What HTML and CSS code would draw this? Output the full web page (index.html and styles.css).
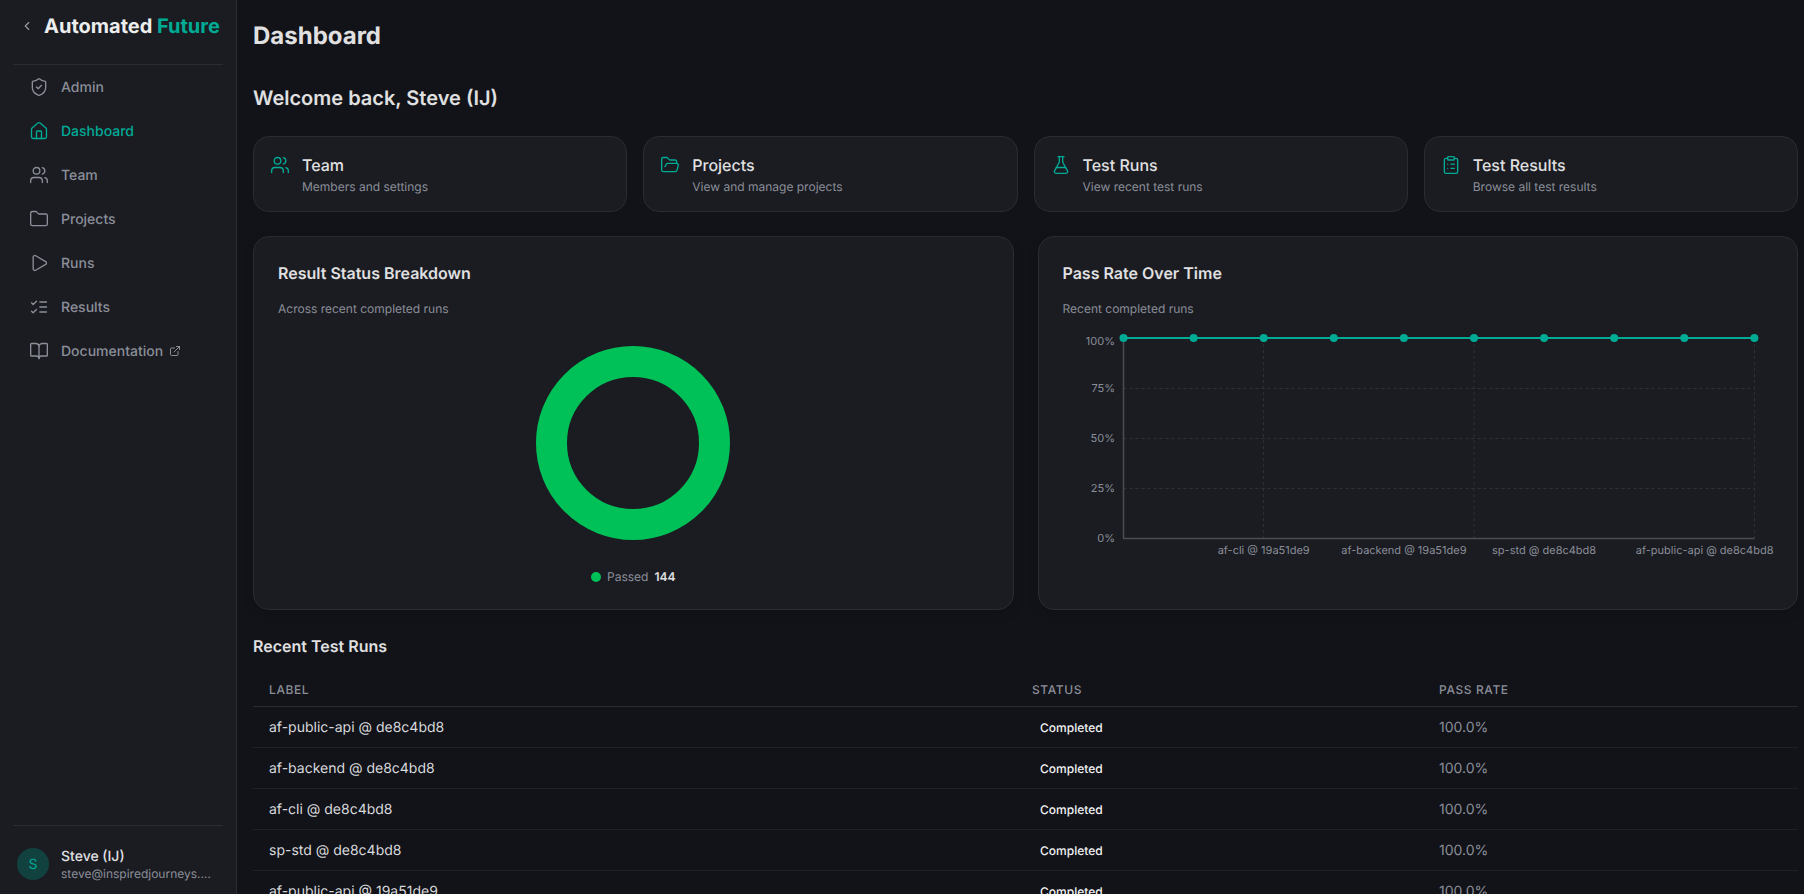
FILE: index.html
```html
<!DOCTYPE html>
<html lang="en">
<head>
<meta charset="utf-8">
<title>Dashboard</title>
<link rel="stylesheet" href="styles.css">
</head>
<body>
<div class="app">
  <aside class="sidebar">
    <div class="brand">
      <svg class="chev" viewBox="0 0 24 24"><path d="m15 18-6-6 6-6"/></svg>
      <span class="brand-name">Automated <em>Future</em></span>
    </div>
    <nav class="nav">
      <a class="nav-item"><svg class="ico" viewBox="0 0 24 24"><path d="M20 13c0 5-3.5 7.5-7.66 8.95a1 1 0 0 1-.67-.01C7.5 20.5 4 18 4 13V6a1 1 0 0 1 1-1c2 0 4.5-1.2 6.24-2.72a1.17 1.17 0 0 1 1.52 0C14.51 3.81 17 5 19 5a1 1 0 0 1 1 1z"/><path d="m9 12 2 2 4-4"/></svg>Admin</a>
      <a class="nav-item active"><svg class="ico" viewBox="0 0 24 24"><path d="M15 21v-8a1 1 0 0 0-1-1h-4a1 1 0 0 0-1 1v8"/><path d="M3 10a2 2 0 0 1 .709-1.528l7-5.999a2 2 0 0 1 2.582 0l7 5.999A2 2 0 0 1 21 10v9a2 2 0 0 1-2 2H5a2 2 0 0 1-2-2z"/></svg>Dashboard</a>
      <a class="nav-item"><svg class="ico" viewBox="0 0 24 24"><path d="M16 21v-2a4 4 0 0 0-4-4H6a4 4 0 0 0-4 4v2"/><circle cx="9" cy="7" r="4"/><path d="M22 21v-2a4 4 0 0 0-3-3.87"/><path d="M16 3.13a4 4 0 0 1 0 7.75"/></svg>Team</a>
      <a class="nav-item"><svg class="ico" viewBox="0 0 24 24"><path d="M20 20a2 2 0 0 0 2-2V8a2 2 0 0 0-2-2h-7.9a2 2 0 0 1-1.69-.9L9.6 3.9A2 2 0 0 0 7.93 3H4a2 2 0 0 0-2 2v13a2 2 0 0 0 2 2Z"/></svg>Projects</a>
      <a class="nav-item"><svg class="ico" viewBox="0 0 24 24"><path d="M5 5a2 2 0 0 1 3.008-1.728l11.997 6.998a2 2 0 0 1 .003 3.458l-12 7A2 2 0 0 1 5 19z"/></svg>Runs</a>
      <a class="nav-item"><svg class="ico" viewBox="0 0 24 24"><path d="m3 17 2 2 4-4"/><path d="m3 7 2 2 4-4"/><path d="M13 6h8"/><path d="M13 12h8"/><path d="M13 18h8"/></svg>Results</a>
      <a class="nav-item"><svg class="ico" viewBox="0 0 24 24"><path d="M12 7v14"/><path d="M3 18a1 1 0 0 1-1-1V4a1 1 0 0 1 1-1h5a4 4 0 0 1 4 4 4 4 0 0 1 4-4h5a1 1 0 0 1 1 1v13a1 1 0 0 1-1 1h-6a3 3 0 0 0-3 3 3 3 0 0 0-3-3z"/></svg>Documentation<svg class="ext" viewBox="0 0 24 24"><path d="M15 3h6v6"/><path d="M10 14 21 3"/><path d="M18 13v6a2 2 0 0 1-2 2H5a2 2 0 0 1-2-2V8a2 2 0 0 1 2-2h6"/></svg></a>
    </nav>
    <div class="user">
      <div class="avatar">S</div>
      <div class="user-info">
        <div class="user-name">Steve (IJ)</div>
        <div class="user-mail">steve@inspiredjourneys.com</div>
      </div>
    </div>
  </aside>
  <main class="main">
    <h1 class="page-title">Dashboard</h1>
    <h2 class="welcome">Welcome back, Steve (IJ)</h2>
    <section class="quick">
      <a class="quick-card"><svg class="qico" viewBox="0 0 24 24"><path d="M16 21v-2a4 4 0 0 0-4-4H6a4 4 0 0 0-4 4v2"/><circle cx="9" cy="7" r="4"/><path d="M22 21v-2a4 4 0 0 0-3-3.87"/><path d="M16 3.13a4 4 0 0 1 0 7.75"/></svg><div><div class="q-title">Team</div><div class="q-sub">Members and settings</div></div></a>
      <a class="quick-card"><svg class="qico" viewBox="0 0 24 24"><path d="m6 14 1.5-2.9A2 2 0 0 1 9.24 10H20a2 2 0 0 1 1.94 2.5l-1.54 6a2 2 0 0 1-1.95 1.5H4a2 2 0 0 1-2-2V5a2 2 0 0 1 2-2h3.9a2 2 0 0 1 1.69.9l.81 1.2a2 2 0 0 0 1.67.9H18a2 2 0 0 1 2 2v2"/></svg><div><div class="q-title">Projects</div><div class="q-sub">View and manage projects</div></div></a>
      <a class="quick-card"><svg class="qico" viewBox="0 0 24 24"><path d="M14 2v6a2 2 0 0 0 .245.96l5.51 10.08A2 2 0 0 1 18 22H6a2 2 0 0 1-1.755-2.96l5.51-10.08A2 2 0 0 0 10 8V2"/><path d="M6.453 15h11.094"/><path d="M8.5 2h7"/></svg><div><div class="q-title">Test Runs</div><div class="q-sub">View recent test runs</div></div></a>
      <a class="quick-card"><svg class="qico" viewBox="0 0 24 24"><rect width="8" height="4" x="8" y="2" rx="1" ry="1"/><path d="M16 4h2a2 2 0 0 1 2 2v14a2 2 0 0 1-2 2H6a2 2 0 0 1-2-2V6a2 2 0 0 1 2-2h2"/><path d="M12 11h4"/><path d="M12 16h4"/><path d="M8 11h.01"/><path d="M8 16h.01"/></svg><div><div class="q-title">Test Results</div><div class="q-sub">Browse all test results</div></div></a>
    </section>
    <section class="charts">
      <div class="chart-card">
        <h3 class="chart-title">Result Status Breakdown</h3>
        <p class="chart-sub">Across recent completed runs</p>
        <div class="donut-wrap"><div class="donut"></div></div>
        <div class="legend"><span class="dot"></span><span class="legend-label">Passed</span><b class="legend-val">144</b></div>
      </div>
      <div class="chart-card">
        <h3 class="chart-title">Pass Rate Over Time</h3>
        <p class="chart-sub">Recent completed runs</p>
        <svg class="line-chart" viewBox="0 0 711 240">
          <g class="grid">
            <path d="M60.5 59.5H691.5M60.5 109.5H691.5M60.5 159.5H691.5"/>
            <path d="M200.5 9V209M411 9V209M691.5 9V209"/>
          </g>
          <path class="axis" d="M60.5 9V209.5H691.5"/>
          <g class="ylab">
            <text x="52" y="16">100%</text><text x="52" y="63">75%</text><text x="52" y="113">50%</text><text x="52" y="163">25%</text><text x="52" y="213">0%</text>
          </g>
          <path class="line" d="M60.5 9H691.5"/>
          <g class="pts">
            <circle cx="60.5" cy="9" r="4"/><circle cx="130.6" cy="9" r="4"/><circle cx="200.7" cy="9" r="4"/><circle cx="270.8" cy="9" r="4"/><circle cx="340.9" cy="9" r="4"/><circle cx="411" cy="9" r="4"/><circle cx="481.1" cy="9" r="4"/><circle cx="551.2" cy="9" r="4"/><circle cx="621.3" cy="9" r="4"/><circle cx="691.4" cy="9" r="4"/>
          </g>
          <g class="xlab">
            <text x="200.7" y="225">af-cli @ 19a51de9</text><text x="340.9" y="225">af-backend @ 19a51de9</text><text x="481.1" y="225">sp-std @ de8c4bd8</text><text class="xlab-end" x="710.5" y="225">af-public-api @ de8c4bd8</text>
          </g>
        </svg>
      </div>
    </section>
    <h3 class="table-title">Recent Test Runs</h3>
    <table class="runs">
      <thead><tr><th class="c-label">Label</th><th class="c-status">Status</th><th class="c-rate">Pass Rate</th></tr></thead>
      <tbody>
        <tr><td class="t-label">af-public-api @ de8c4bd8</td><td><span class="badge">Completed</span></td><td class="t-rate">100.0%</td></tr>
        <tr><td class="t-label">af-backend @ de8c4bd8</td><td><span class="badge">Completed</span></td><td class="t-rate">100.0%</td></tr>
        <tr><td class="t-label">af-cli @ de8c4bd8</td><td><span class="badge">Completed</span></td><td class="t-rate">100.0%</td></tr>
        <tr><td class="t-label">sp-std @ de8c4bd8</td><td><span class="badge">Completed</span></td><td class="t-rate">100.0%</td></tr>
        <tr><td class="t-label">af-public-api @ 19a51de9</td><td><span class="badge">Completed</span></td><td class="t-rate">100.0%</td></tr>
      </tbody>
    </table>
  </main>
</div>
</body>
</html>
```
FILE: styles.css
```css
* { box-sizing: border-box; }
html, body { margin: 0; height: 100%; overflow: hidden; }
body { background: #111318; color: #e0e0e1; font-family: Inter, "Liberation Sans", sans-serif; text-rendering: geometricPrecision; }
.app { display: flex; height: 894px; }

.sidebar { width: 237px; flex: none; background: #1a1c22; border-right: 1px solid #2a2c32; padding: 0 13px; display: flex; flex-direction: column; }
.brand { height: 65px; flex: none; border-bottom: 1px solid #2a2c32; display: flex; align-items: flex-start; padding: 14px 0 0 7px; gap: 10px; }
.chev { width: 14px; height: 14px; margin-top: 5px; flex: none; fill: none; stroke: #9a9ca5; stroke-width: 2; stroke-linecap: round; stroke-linejoin: round; }
.brand-name { font-size: 20px; font-weight: 700; line-height: 24px; color: #eceded; white-space: nowrap; }
.brand-name em { font-style: normal; color: #00ab96; }
.nav { display: flex; flex-direction: column; flex: 1; }
.nav-item { height: 44px; display: flex; align-items: center; padding-left: 16px; gap: 12px; font-size: 14px; font-weight: 500; color: #8b8e98; }
.nav-item.active { color: #00ab96; }
.ico { width: 20px; height: 20px; flex: none; fill: none; stroke: currentColor; stroke-width: 1.6; stroke-linecap: round; stroke-linejoin: round; }
.ext { width: 12px; height: 12px; margin-left: -6px; fill: none; stroke: currentColor; stroke-width: 2; stroke-linecap: round; stroke-linejoin: round; }
.user { border-top: 1px solid #2a2c32; height: 69px; flex: none; display: flex; gap: 12px; padding: 22px 11px 0 4px; }
.avatar { width: 32px; height: 32px; border-radius: 50%; background: #12423f; color: #00ab96; font-size: 14px; display: flex; align-items: center; justify-content: center; flex: none; }
.user-info { min-width: 0; flex: 1; margin-top: -1px; }
.user-name { font-size: 14px; line-height: 20px; font-weight: 500; color: #e0e0e1; }
.user-mail { font-size: 12px; line-height: 16px; margin-top: -1px; color: #8b8e98; overflow: hidden; text-overflow: ellipsis; white-space: nowrap; }

.main { flex: 1; min-width: 0; padding: 19px 6px 0 16px; overflow: hidden; }
.page-title { margin: 0; font-size: 24px; line-height: 34px; font-weight: 700; color: #e0e0e1; }
.welcome { margin: 31px 0 0; font-size: 20px; line-height: 28px; font-weight: 600; color: #e0e0e1; }
.quick { display: grid; grid-template-columns: repeat(4, minmax(0, 1fr)); gap: 16px; margin-top: 24px; }
.quick-card { height: 76px; background: #1a1c22; border: 1px solid #2a2c32; border-radius: 16px; display: flex; align-items: flex-start; gap: 12px; padding: 16px 16px 0 16px; }
.qico { width: 20px; height: 20px; margin-top: 2px; flex: none; fill: none; stroke: #00ab96; stroke-width: 1.6; stroke-linecap: round; stroke-linejoin: round; }
.q-title { font-size: 16px; line-height: 24px; font-weight: 500; color: #e0e0e1; }
.q-sub { font-size: 12px; line-height: 16px; margin-top: 2px; color: #8b8e98; }

.charts { display: grid; grid-template-columns: repeat(2, minmax(0, 1fr)); gap: 24px; margin-top: 24px; }
.chart-card { height: 374px; background: #1a1c22; border: 1px solid #2a2c32; border-radius: 16px; padding: 24px; box-shadow: 0 4px 12px rgba(0,0,0,.12); }
.chart-title { margin: 0; font-size: 16px; line-height: 24px; font-weight: 600; color: #e0e0e1; }
.chart-sub { margin: 16px 0 0; font-size: 12px; line-height: 16px; color: #8b8e98; }
.donut-wrap { display: flex; justify-content: center; margin-top: 29px; }
.donut { width: 194px; height: 194px; border-radius: 50%; border: 31px solid #00c158; }
.legend { display: flex; justify-content: center; align-items: center; margin-top: 29px; font-size: 12px; line-height: 16px; }
.dot { width: 10px; height: 10px; border-radius: 50%; background: #00c158; margin-right: 6px; }
.legend-label { color: #8b8e98; margin-right: 6px; }
.legend-val { font-weight: 600; color: #e0e0e1; }
.line-chart { display: block; width: 711px; height: 240px; margin-top: 12px; overflow: visible; font-size: 11px; }
.grid path { stroke: #2e3036; stroke-width: 1; stroke-dasharray: 3 3; fill: none; }
.axis { stroke: #4a4c52; stroke-width: 1.5; fill: none; }
.line { stroke: #00ab96; stroke-width: 2; fill: none; }
.pts circle { fill: #00ab96; }
.ylab text { fill: #8b8e98; text-anchor: end; }
.xlab text { fill: #8b8e98; text-anchor: middle; }
.xlab .xlab-end { text-anchor: end; }

.table-title { margin: 22px 0 0; font-size: 16px; line-height: 28px; font-weight: 600; color: #e0e0e1; }
.runs { width: 100%; border-collapse: collapse; table-layout: fixed; margin-top: 10px; }
.runs th { text-align: left; font-size: 12px; line-height: 16px; font-weight: 500; letter-spacing: 0.6px; text-transform: uppercase; color: #8b8e98; padding: 12px 16px 8px; border-bottom: 1px solid #2a2c32; }
.c-label { width: 763px; }
.c-status { width: 407px; }
.runs td { height: 41px; padding: 0 16px; border-bottom: 1px solid #1f2126; font-size: 14px; }
.t-label { color: #d8d9dc; }
.t-rate { color: #8b8e98; }
.badge { display: inline-block; padding: 0 8px; font-size: 12px; font-weight: 500; line-height: 16px; color: #f2f2f3; margin-top: 2px; }
```
